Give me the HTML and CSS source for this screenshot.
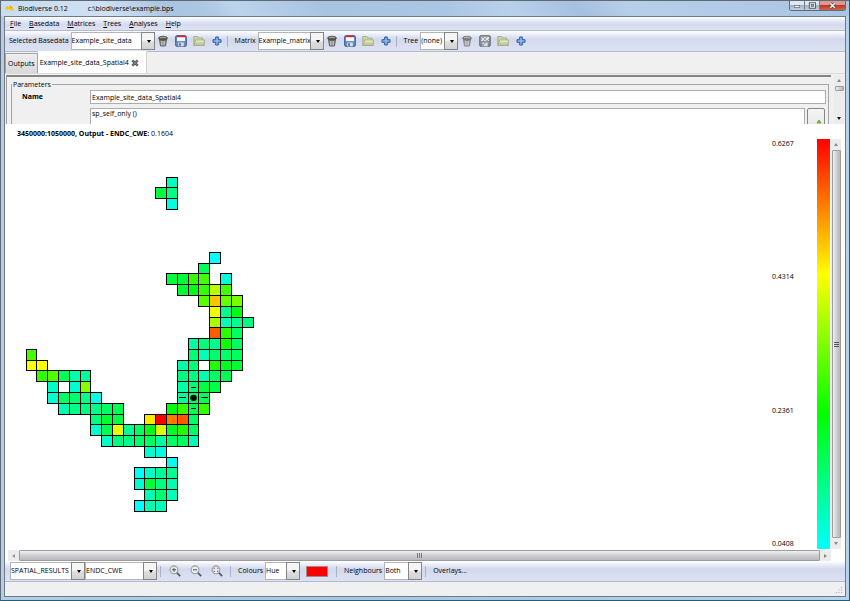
FILE: index.html
```html
<!DOCTYPE html>
<html lang="en">
<head>
<meta charset="utf-8">
<title>Biodiverse 0.12</title>
<link rel="stylesheet" href="styles.css">
</head>
<body>
<svg class="defs" aria-hidden="true">
  <defs>
    <linearGradient id="folder-fill" x1="0" y1="0" x2="0" y2="1"><stop offset="0" stop-color="#dfe3bd"/><stop offset="1" stop-color="#b9c08e"/></linearGradient>
  </defs>
  <symbol id="trash" viewBox="0 0 12 12">
    <path d="M2.500 4.500h7l-1 6.500h-5z" fill="#8b8b86" stroke="#4a4a46" stroke-width=".8"/>
    <path d="M4.400 6v4.500M6 6v4.500M7.600 6v4.500" stroke="#d4d4ce" stroke-width=".7"/>
    <ellipse cx="6" cy="3.200" rx="4.400" ry="2" fill="#5e5e58" stroke="#3c3c38" stroke-width=".7"/>
    <path d="M3 3c1-1 5-1 6 0" fill="none" stroke="#c9c9c2" stroke-width=".8"/>
  </symbol>
  <symbol id="save" viewBox="0 0 12 12">
    <rect x=".7" y=".7" width="10.600" height="10.600" rx="1" fill="#6c90c4" stroke="#36598e"/>
    <rect x="2" y="1" width="8" height="5" fill="#f7f7f7"/>
    <rect x="2" y=".6" width="8" height="1.600" fill="#dc2525"/>
    <rect x="3.200" y="7.500" width="5.600" height="3.800" fill="#d9dde4"/>
    <rect x="4.200" y="8.300" width="1.600" height="2.400" fill="#36598e"/>
  </symbol>
  <symbol id="save-off" viewBox="0 0 12 12">
    <rect x=".7" y=".7" width="10.600" height="10.600" rx="1" fill="#858b98" stroke="#666d7b"/>
    <rect x="2" y="1" width="8" height="5" fill="#e4e4e6"/>
    <path d="M2 1.400h8" stroke="#b78488"/>
    <rect x="3.200" y="7.500" width="5.600" height="3.800" fill="#d4d6da"/>
    <path d="M1 3l2 2M3 1l8 8M1 7l4 4M9 1l2 2M3 11l8-8M1 5l4-4M1 9l8-8" stroke="#8f95a3" stroke-width=".8"/>
  </symbol>
  <symbol id="folder" viewBox="0 0 12 12">
    <path d="M.8 10.500v-9h4l1 1.500h4v2" fill="#cdd2a8" stroke="#a0a680" stroke-width=".8"/>
    <path d="M.8 10.500L2.600 5h8.800v5.500z" fill="url(#folder-fill)" stroke="#a0a680" stroke-width=".8"/>
    <path d="M3 6.200h7.500" stroke="#f0f2dc" stroke-width=".8"/>
  </symbol>
  <symbol id="plus" viewBox="0 0 12 12">
    <path d="M4.700 2h2.600v2.700H10v2.600H7.300V10H4.700V7.300H2V4.700h2.700z" fill="#8db6e6" stroke="#2a5ba0"/>
  </symbol>
  <symbol id="lens" viewBox="0 0 12 12">
    <circle cx="5" cy="4.800" r="3.900" fill="#e9ecee" stroke="#989b9c" stroke-width="1.100"/>
    <path d="M8 7.800l3.200 3.400" stroke="#58595d" stroke-width="1.700"/>
  </symbol>
</svg>

<header class="titlebar">
  <svg class="logo" viewBox="0 0 9 7" aria-hidden="true"><path d="M0 3l2-2 2 1 1-2 3 3 1 3-2-1-1 1-2-2-2 1-1-1z" fill="#f5c51c"/><path d="M5 1l2 2" stroke="#ef7a20"/></svg>
  <h1 class="title">Biodiverse 0.12</h1>
  <span>c:\biodiverse\example.bps</span>
  <div class="window-buttons">
    <button type="button" aria-label="Minimize"><svg viewBox="0 0 14 10"><rect x="4" y="5" width="6" height="2" fill="#fff" stroke="#555c68" stroke-width=".7"/></svg></button>
    <button type="button" aria-label="Maximize"><svg viewBox="0 0 14 10"><rect x="4" y="2" width="7" height="6" fill="#fff" stroke="#454c58"/><rect x="6" y="4" width="3" height="2" fill="#9aabc0" stroke="#454c58" stroke-width=".7"/></svg></button>
    <button type="button" class="close" aria-label="Close"><svg viewBox="0 0 26 10"><path d="M10.500 2.500l5 5m0-5l-5 5" stroke="#5d3436" stroke-width="3"/><path d="M10.500 2.500l5 5m0-5l-5 5" stroke="#fff" stroke-width="1.600"/></svg></button>
  </div>
</header>

<main class="window">
  <nav class="menubar">
    <button type="button"><u>F</u>ile</button>
    <button type="button"><u>B</u>asedata</button>
    <button type="button"><u>M</u>atrices</button>
    <button type="button"><u>T</u>rees</button>
    <button type="button"><u>A</u>nalyses</button>
    <button type="button"><u>H</u>elp</button>
  </nav>

  <div class="toolbar">
    <div class="group">
      <label for="basedata">Selected Basedata</label>
      <span class="combo wide"><select id="basedata"><option>Example_site_data</option></select></span>
      <span class="icons">
        <button type="button" aria-label="Delete basedata"><svg><use href="#trash"/></svg></button>
        <button type="button" aria-label="Save basedata"><svg><use href="#save"/></svg></button>
        <button type="button" aria-label="Open basedata"><svg><use href="#folder"/></svg></button>
        <button type="button" aria-label="New basedata"><svg><use href="#plus"/></svg></button>
      </span>
    </div>
    <div class="group">
      <label for="matrix">Matrix</label>
      <span class="combo medium"><select id="matrix"><option>Example_matrix</option></select></span>
      <span class="icons">
        <button type="button" aria-label="Delete matrix"><svg><use href="#trash"/></svg></button>
        <button type="button" aria-label="Save matrix"><svg><use href="#save"/></svg></button>
        <button type="button" aria-label="Open matrix"><svg><use href="#folder"/></svg></button>
        <button type="button" aria-label="New matrix"><svg><use href="#plus"/></svg></button>
      </span>
    </div>
    <div class="group">
      <label for="tree">Tree</label>
      <span class="combo small"><select id="tree"><option>(none)</option></select></span>
      <span class="icons">
        <button type="button" class="dim" aria-label="Delete tree"><svg><use href="#trash"/></svg></button>
        <button type="button" aria-label="Save tree"><svg><use href="#save-off"/></svg></button>
        <button type="button" aria-label="Open tree"><svg><use href="#folder"/></svg></button>
        <button type="button" aria-label="New tree"><svg><use href="#plus"/></svg></button>
      </span>
    </div>
  </div>

  <div class="tabs">
    <button type="button" class="tab">Outputs</button>
    <div class="tab active">
      <span>Example_site_data_Spatial4</span>
      <button type="button" aria-label="Close tab"><svg viewBox="0 0 8 8"><path d="M1.300 1.300l5.400 5.400m0-5.400L1.300 6.700" stroke="#555" stroke-width="2.400"/><path d="M2 2l4 4m0-4L2 6" stroke="#aaa" stroke-width=".5"/></svg></button>
    </div>
  </div>

  <section class="params">
    <div class="viewport">
      <fieldset>
        <legend>Parameters</legend>
        <div class="field">
          <label class="strong" for="name">Name</label>
          <input id="name" type="text" value="Example_site_data_Spatial4">
        </div>
        <div class="field">
          <span></span>
          <textarea aria-label="Neighbour condition">sp_self_only ()</textarea>
          <button type="button" class="verify" aria-label="Verify"><svg viewBox="0 0 8 8"><path d="M2 4l2-3 2 3z" fill="#8fd03c" stroke="#4d8c1c" stroke-width=".7"/></svg></button>
        </div>
      </fieldset>
    </div>
    <div class="vscroll short">
      <i class="up"></i><i class="thumb"></i><i class="down"></i>
    </div>
  </section>

  <section class="results">
    <p class="info"><b>3450000:1050000, Output - ENDC_CWE:</b> 0.1604</p>
    <div class="plot">
      <div class="canvas"><svg id="map" class="map" viewBox="0 0 21 31" preserveAspectRatio="none" role="img" aria-label="Map of ENDC_CWE values"></svg></div>
      <div class="legend-labels"><span>0.6267</span><span>0.4314</span><span>0.2361</span><span>0.0408</span></div>
      <div class="legend-bar"></div>
      <div class="vscroll">
        <i class="up"></i><i class="thumb grip"></i><i class="down"></i>
      </div>
    </div>
    <div class="hscroll"><i class="left"></i><i class="thumb grip"></i><i class="right"></i></div>
  </section>

  <div class="toolbar bottom">
    <div class="group">
      <span class="combo list"><select aria-label="List"><option>SPATIAL_RESULTS</option></select></span>
      <span class="combo index"><select aria-label="Index"><option>ENDC_CWE</option></select></span>
    </div>
    <div class="group zooms">
      <button type="button" aria-label="Zoom in"><svg viewBox="0 0 12 12"><use href="#lens"/><path d="M3 4.800h4M5 2.800v4" stroke="#555"/></svg></button>
      <button type="button" aria-label="Zoom out"><svg viewBox="0 0 12 12"><use href="#lens"/><path d="M3 4.800h4" stroke="#555"/></svg></button>
      <button type="button" aria-label="Zoom to fit"><svg viewBox="0 0 12 12"><use href="#lens"/><path d="M3 4V3h1M6 3h1v1M7 5.500v1H6M4 6.500H3v-1" fill="none" stroke="#666" stroke-width=".8"/></svg></button>
    </div>
    <div class="group">
      <label for="colours">Colours</label>
      <span class="combo hue"><select id="colours"><option>Hue</option></select></span>
      <button type="button" class="swatch" aria-label="Pick colour"></button>
    </div>
    <div class="group">
      <label for="neighbours">Neighbours</label>
      <span class="combo small"><select id="neighbours"><option>Both</option></select></span>
    </div>
    <div class="group"><button type="button" class="text">Overlays...</button></div>
  </div>

  <footer class="status">
    <svg viewBox="0 0 7 7" aria-hidden="true"><path d="M5 0h1v1H5zM5 2.500h1v1H5zM2.500 2.500h1v1h-1zM5 5h1v1H5zM2.500 5h1v1h-1zM0 5h1v1H0z" fill="#aaa"/></svg>
  </footer>
</main>
<script src="map.js"></script>
</body>
</html>
```
FILE: styles.css
```css
* { box-sizing: border-box; }

body {
  margin: 0;
  min-height: 100vh;
  display: flex;
  flex-direction: column;
  padding: 0 3px 3px;
  border: 1px solid #5f6975;
  border-right-color: #1d5a6c;
  border-bottom-color: #1f6076;
  background: linear-gradient(90deg, #b5cde7, #a9c6e0 40%, #b9d1ea);
  color: #000;
  font: 7px/10px "Open Sans", "Noto Sans", sans-serif;
}

button, input, select, textarea { font: inherit; color: inherit; }

button {
  padding: 0;
  border: 0;
  background: none;
  display: flex;
  align-items: center;
  justify-content: center;
}

.defs { position: absolute; width: 0; height: 0; }

/* Window frame */
.titlebar {
  height: 15px;
  margin: 0 -3px;
  padding-left: 4px;
  display: flex;
  align-items: center;
  background: linear-gradient(50deg, #c9dcf0 0, #cfe0f3 13%, #a9c5e1 20%, #aac6e1 24%, #bdd3ec 28%, #a8c5e0 38%, #a9c6e2 52%, #bad0ea 60%, #a5c1de 68%, #b8cfe9 74%, #a9c4e0 100%);
}
.logo { width: 9px; height: 7px; margin-right: 4px; }
.title { margin: 0 20px 0 0; font: inherit; }
.window-buttons {
  display: flex;
  align-self: flex-start;
  margin: 0 3px 0 auto;
  border: 1px solid #5d6b7e;
  border-top: 0;
  border-radius: 0 0 3px 3px;
  overflow: hidden;
}
.window-buttons button {
  width: 15px;
  height: 9px;
  border-right: 1px solid #6f7d90;
  background: linear-gradient(#dfe7f0 45%, #a5b5c8 50%, #c2d0df);
}
.window-buttons .close { width: 25px; border: 0; background: linear-gradient(#dc9b8e 45%, #b83a25 50%, #d0654c); }
.window-buttons svg { width: 100%; height: 9px; }

.window {
  flex: 1;
  display: flex;
  flex-direction: column;
  border: 1px solid #6f7a88;
  background: #f0f0f0;
}

/* Menu and tool bars */
.menubar {
  height: 14px;
  padding-left: 5px;
  display: flex;
  gap: 8px;
  background: linear-gradient(#fff, #e6eaf6 30%, #d4daee 60%, #dfe4f3);
  border-bottom: 1px solid #b5bad0;
}

.toolbar {
  height: 21px;
  padding-left: 4px;
  display: flex;
  align-items: center;
  background: linear-gradient(#fff, #e8ecf7 20%, #d3d9ed 40%, #dde2f3);
  border-bottom: 1px solid #b5bad0;
}
.group { display: flex; align-items: center; }
.group + .group::before {
  content: "";
  width: 1px;
  height: 11px;
  margin: 0 7px 0 1px;
  background: #aab0c2;
}
.group label { margin-right: 2px; }
.icons { display: flex; gap: 1px; }
.icons button { width: 17px; height: 18px; }
.icons svg { width: 12px; height: 12px; }
.dim { opacity: .7; }

.combo { position: relative; height: 18px; }
.combo select {
  appearance: none;
  width: 100%;
  height: 18px;
  padding: 0 11px 0 0;
  border: 1px solid #b4b4b4;
  border-radius: 0;
  background: #fff;
}
.combo::before {
  content: "";
  position: absolute;
  inset: 0 0 0 auto;
  width: 12px;
  border: 1px solid #858585;
  background: linear-gradient(#f5f5f5 45%, #dedede 55%, #d2d2d2);
  pointer-events: none;
}
.combo::after {
  content: "";
  position: absolute;
  right: 4px;
  top: 8px;
  border: 2px solid transparent;
  border-top: 3px solid #000;
  border-bottom: 0;
  pointer-events: none;
}
.wide { width: 84px; }
.medium { width: 66px; }
.small { width: 38px; }
.list { width: 75px; }
.index { width: 72px; }
.hue { width: 35px; }

/* Tabs */
.tabs { height: 22px; display: flex; align-items: flex-end; border-bottom: 1px solid #dcdcdc; }
.tab { height: 20px; padding: 0 2px; border: 1px solid #a5a5a5; border-bottom: 0; background: linear-gradient(#efefef, #d8d8d8); }
.tab.active {
  height: 22px;
  padding: 0 7px 0 1px;
  display: flex;
  align-items: center;
  gap: 2px;
  border-color: #fff #d0d0d0 #fff #fff;
  background: #fff;
}
.tab svg { width: 8px; height: 8px; }

/* Parameters pane */
.params { height: 50px; display: flex; gap: 1px; }
.viewport { flex: 1; margin: 1px 0 0 1px; overflow: hidden; border-top: 2px solid #858585; border-left: 1px solid #9c9c9c; }
fieldset { min-width: 0; margin: 3px 2px 0 4px; padding: 1px 2px 8px 10px; border: 1px solid #a5a5a5; }
legend { margin-left: -10px; padding: 0 1px; line-height: 9px; }
.field { display: flex; align-items: flex-start; margin-bottom: 4px; }
.field > :first-child { width: 68px; }
.strong { font-weight: bold; line-height: 14px; }
.field input, .field textarea {
  flex: 1;
  min-width: 0;
  height: 14px;
  margin: 0;
  padding: 0 1px;
  border: 1px solid #adadad;
  background: #fff;
}
.field textarea { height: 30px; resize: none; overflow: hidden; }
.verify {
  width: 18px;
  height: 30px;
  margin: 0 1px 0 2px;
  padding: 0 0 0 5px;
  border: 1px solid #888;
  border-radius: 2px;
  background: linear-gradient(#f5f5f5, #e0e0e0);
}
.verify svg { width: 8px; height: 8px; }

/* Scroll bars */
.vscroll { width: 10px; display: flex; flex-direction: column; align-items: center; background: #ececec; }
.vscroll.short { margin: 1px 1px 0 2px; }
.vscroll .thumb { flex: 1; width: 9px; background: linear-gradient(90deg, #f3f3f3, #cfcfd2 50%, #b9b9bd); }
.vscroll.short .thumb { flex: 0 0 5px; margin-bottom: auto; }
.thumb { border: 1px solid #9c9c9c; border-radius: 1px; display: flex; align-items: center; justify-content: center; }
.up, .down, .left, .right { flex: 0 0 11px; display: flex; align-items: center; justify-content: center; }
.up::before, .down::before, .left::before, .right::before { content: ""; border: 2px solid transparent; }
.up::before { border-top: 0; border-bottom: 3px solid #888; }
.down::before { border-bottom: 0; border-top: 3px solid #888; }
.short .down::before { border-top-color: #111; }
.left::before { border-left: 0; border-right: 3px solid #999; }
.right::before { border-right: 0; border-left: 3px solid #888; }
.grip::before { content: ""; width: 5px; height: 5px; }
.vscroll .grip::before { background: repeating-linear-gradient(#555 0 1px, transparent 1px 2px); }
.hscroll .grip::before { background: repeating-linear-gradient(90deg, #777 0 1px, transparent 1px 2px); }

/* Results pane */
.results { flex: 1; display: flex; flex-direction: column; background: #fff; }
.info { margin: 0; padding: 5px 0 0 12px; }
.plot { flex: 1; display: flex; }
.canvas { flex: 1; padding: 38px 0 0 21px; }
.map { display: block; width: 227px; height: 334px; overflow: visible; }
.map rect { stroke: #000; stroke-width: 1; vector-effect: non-scaling-stroke; shape-rendering: crispEdges; }
.map path { stroke: #000; stroke-width: 1; vector-effect: non-scaling-stroke; shape-rendering: crispEdges; }
.legend-labels { width: 45px; display: flex; flex-direction: column; justify-content: space-between; }
.legend-bar { width: 13px; margin-right: 1px; background: linear-gradient(#f00, #ff0 33%, #0f0 67%, #0ff); }
.plot .vscroll { margin-right: 4px; }
.hscroll { height: 11px; margin: 1px 14px 0 3px; display: flex; background: #ececec; }
.hscroll .thumb { flex: 1; background: linear-gradient(#f0f0f0, #cfcfd2 50%, #b9b9bd); }

/* Bottom bar */
.bottom { padding-left: 5px; }
.bottom .group + .group::before { margin: 0 7px 0 3px; }
.bottom .group.zooms::before { margin-right: 3px; }
.zooms button { width: 21px; height: 18px; }
.zooms svg { width: 12px; height: 12px; }
.swatch { width: 22px; height: 11px; margin: 0 5px 0 6px; border: 1px solid #a88; background: #f00; }
.status { height: 14px; display: flex; align-items: flex-end; justify-content: flex-end; padding: 2px; }
.status svg { width: 7px; height: 7px; }
```
FILE: map.js
```js
// Runs of adjacent cells: [row, first column, fill colours].
const runs = [
  [0, 13, "00ffbe"],
  [1, 12, "00ff40 00ff82"],
  [2, 13, "00ffe1"],
  [7, 17, "00ffff"],
  [8, 16, "00ff5a"],
  [9, 13, "00ff3c 00ff38 33ff00 44ff00"],
  [9, 18, "00ffd8"],
  [10, 14, "00ff30 00ff10 33ff00 bbff00 44ff00"],
  [11, 16, "55ff00 ffc400 66ff00 77ff00"],
  [12, 17, "f0ff00 00ff88 00ff10"],
  [13, 17, "aaff00 00ffb8 00ff90 00ff80"],
  [14, 17, "ff5c00 2eff00 00ff60"],
  [15, 15, "00ffa0 00ff78 00ff90 10ff00 00ff60"],
  [16, 0, "44ff00"],
  [16, 15, "00ff70 00ffb8 00ff70 00ff68 00ff60"],
  [17, 0, "ffff00 ffff00"],
  [17, 14, "00ffa8 00ff78"],
  [17, 17, "22ff00 00ff20 00ff30"],
  [18, 1, "30ff00 50ff00 00ff58 00ffa8 00ff98"],
  [18, 14, "00ff80 00ff80 00ffb0 00ff60 00ff50"],
  [19, 2, "00ffc8"],
  [19, 4, "00ffd0 88ff00"],
  [19, 14, "00ffa8 00ff70 00ff40 00ff48"],
  [20, 2, "00ffd0 00ff60 00ff70 00ff88 00ffe8"],
  [20, 14, "00ff98 00ff60 00ff50"],
  [21, 3, "00ffb0 00ff88 00ff80 00ff88 00ff60 00ff50"],
  [21, 13, "00ff08 38ff00 00ff50 30ff00"],
  [22, 6, "00ff78 00ff30 00ff48"],
  [22, 11, "ffe800 ff0000 ff7800 ff5800 00ff60"],
  [23, 6, "00ffd0 00ff50 e8ff00 00ff98 00ff60 00ff10 d8ff00 00ff20 20ff00 00ff60"],
  [24, 7, "00ffc8 00ff80 00ff88 00ff68 00ff60 00ffa0 00ff60 00ff60 00ffb8"],
  [25, 11, "00ffd0 00ffe0"],
  [26, 13, "00fff0"],
  [27, 10, "00ffff 00ffc8 00ff98 00ff90"],
  [28, 10, "00ffd0 00ff38 00ff80 00ffb0"],
  [29, 11, "00ffb0 00ff70 00ffb8"],
  [30, 10, "00ffff 00ffb0 00ffb8"]
];

const map = document.getElementById("map");
const add = (tag, attrs) => {
  const node = document.createElementNS("http://www.w3.org/2000/svg", tag);
  for (const key in attrs) node.setAttribute(key, attrs[key]);
  map.append(node);
};

for (const [row, first, fills] of runs) {
  fills.split(" ").forEach((fill, i) => {
    add("rect", { x: first + i, y: row, width: 1, height: 1, fill: "#" + fill });
  });
}

// Selected cell and its neighbours.
add("circle", { cx: 15.5, cy: 20.5, r: 0.3 });
add("path", { d: "M14.2 20.5h.6M16.200 20.500h.6M15.250 19.500h.5M15.250 21.500h.5" });
```
